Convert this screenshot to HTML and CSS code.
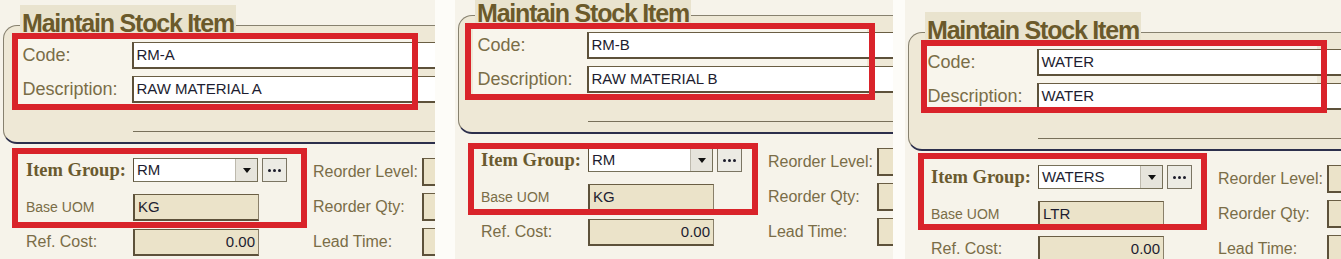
FILE: index.html
```html
<!DOCTYPE html>
<html>
<head>
<meta charset="utf-8">
<link rel="stylesheet" href="styles.css">
</head>
<body>
<div class="strip">
  <section class="panel p1">
    <div class="inner">
      <div class="fs">
        <div class="legend">Maintain Stock Item</div>
        <div class="ident">
          <span class="lbl">Code:</span><div class="inp wide">RM-A</div>
          <span class="lbl">Description:</span><div class="inp wide">RAW MATERIAL A</div>
        </div>
        <div class="sep"></div>
      </div>
      <div class="details">
        <div class="left">
          <span class="lbl bold">Item Group:</span>
          <div class="pick"><div class="combo"><span class="val">RM</span><span class="dd"><i class="tri"></i></span></div><div class="more"><i></i><i></i><i></i></div></div>
          <span class="lbl small">Base UOM</span><div class="inp ro">KG</div>
          <span class="lbl">Ref. Cost:</span><div class="inp ro num">0.00</div>
        </div>
        <div class="right">
          <span class="lbl">Reorder Level:</span><div class="inp ro stub"></div>
          <span class="lbl">Reorder Qty:</span><div class="inp ro stub"></div>
          <span class="lbl">Lead Time:</span><div class="inp ro stub"></div>
        </div>
      </div>
      <div class="mark m1"></div>
      <div class="mark m2"></div>
    </div>
  </section>
  <section class="panel p2">
    <div class="inner">
      <div class="fs">
        <div class="legend">Maintain Stock Item</div>
        <div class="ident">
          <span class="lbl">Code:</span><div class="inp wide">RM-B</div>
          <span class="lbl">Description:</span><div class="inp wide">RAW MATERIAL B</div>
        </div>
        <div class="sep"></div>
      </div>
      <div class="details">
        <div class="left">
          <span class="lbl bold">Item Group:</span>
          <div class="pick"><div class="combo"><span class="val">RM</span><span class="dd"><i class="tri"></i></span></div><div class="more"><i></i><i></i><i></i></div></div>
          <span class="lbl small">Base UOM</span><div class="inp ro">KG</div>
          <span class="lbl">Ref. Cost:</span><div class="inp ro num">0.00</div>
        </div>
        <div class="right">
          <span class="lbl">Reorder Level:</span><div class="inp ro stub"></div>
          <span class="lbl">Reorder Qty:</span><div class="inp ro stub"></div>
          <span class="lbl">Lead Time:</span><div class="inp ro stub"></div>
        </div>
      </div>
      <div class="mark m1"></div>
      <div class="mark m2"></div>
    </div>
  </section>
  <section class="panel p3">
    <div class="inner">
      <div class="fs">
        <div class="legend">Maintain Stock Item</div>
        <div class="ident">
          <span class="lbl">Code:</span><div class="inp wide">WATER</div>
          <span class="lbl">Description:</span><div class="inp wide">WATER</div>
        </div>
        <div class="sep"></div>
      </div>
      <div class="details">
        <div class="left">
          <span class="lbl bold">Item Group:</span>
          <div class="pick"><div class="combo"><span class="val">WATERS</span><span class="dd"><i class="tri"></i></span></div><div class="more"><i></i><i></i><i></i></div></div>
          <span class="lbl small">Base UOM</span><div class="inp ro">LTR</div>
          <span class="lbl">Ref. Cost:</span><div class="inp ro num">0.00</div>
        </div>
        <div class="right">
          <span class="lbl">Reorder Level:</span><div class="inp ro stub"></div>
          <span class="lbl">Reorder Qty:</span><div class="inp ro stub"></div>
          <span class="lbl">Lead Time:</span><div class="inp ro stub"></div>
        </div>
      </div>
      <div class="mark m1"></div>
      <div class="mark m2"></div>
    </div>
  </section>
</div>
</body>
</html>
```
FILE: styles.css
```css
html, body {
  margin: 0;
  padding: 0;
  background: #fdfcf8;
  font-family: "Liberation Sans", Arial, sans-serif;
}
.strip {
  display: flex;
  width: 1341px;
  height: 259px;
  overflow: hidden;
}
.panel {
  height: 259px;
  overflow: hidden;
  background: #f6f3ea;
  flex: none;
}
.p1 { width: 435px; margin-right: 20px; }
.p2 { width: 438px; margin-right: 12px; --dy: -10px; }
.p3 { width: 436px; --dy: 7px; }
.inner {
  position: relative;
  display: flow-root;
  margin-top: var(--dy, 0px);
}
.fs {
  position: relative;
  box-sizing: border-box;
  margin: 25px 0 0 3px;
  width: 470px;
  height: 119px;
  background: #eee8d6;
  border: 1.5px solid #87816f;
  border-right: none;
  border-bottom: 2.5px solid #2c2f4c;
  border-radius: 14px 0 0 14px;
  padding: 0;
}
.legend {
  position: absolute;
  left: 16px;
  top: -21px;
  height: 29px;
  padding: 0 2px;
  background: #e9e3ce;
  color: #6b5a2b;
  font-weight: bold;
  font-size: 25px;
  letter-spacing: -1.2px;
  line-height: 36px;
  white-space: nowrap;
}
.ident {
  margin: 12.5px 0 0 13.5px;
  width: 394px;
  box-sizing: border-box;
  padding: 3px 0 1px 0;
  background: #f8f5ec;
  display: grid;
  grid-template-columns: 114px 1fr;
  grid-auto-rows: 27px;
  row-gap: 7px;
  align-items: center;
}
.lbl {
  color: #7a6d47;
  font-size: 16px;
  white-space: nowrap;
}
.ident .lbl {
  font-size: 18px;
  padding-left: 5px;
}
.inp {
  box-sizing: border-box;
  height: 27px;
  background: #ffffff;
  border-top: 1.5px solid #6a5e44;
  border-left: 2px solid #5d513a;
  border-bottom: 2px solid #5d513a;
  color: #1d1d30;
  font-size: 15px;
  line-height: 23px;
  padding-left: 3px;
  white-space: nowrap;
}
.inp.wide {
  width: 330px;
}
.sep {
  margin: 27px 0 0 128.5px;
  border-top: 1.5px solid #78705a;
}
.details {
  display: flex;
  margin-top: 14px;
  padding-left: 26px;
}
.left {
  display: grid;
  grid-template-columns: 107px auto;
  grid-auto-rows: 28px;
  row-gap: 7px;
  align-items: center;
}
.right {
  margin-left: 26px;
  display: grid;
  grid-template-columns: 109px 40px;
  grid-auto-rows: 28px;
  row-gap: 7px;
  align-items: center;
}
.lbl.bold {
  font-family: "Liberation Serif", "Times New Roman", serif;
  font-weight: bold;
  font-size: 18.5px;
  color: #6a5a2f;
  align-self: start;
  line-height: 24px;
}
.lbl.small {
  font-size: 14px;
}
.inp.ro {
  width: 126px;
  background: #ebe3c9;
  border-right: 1px solid #8a806a;
}
.inp.num {
  text-align: right;
  padding-right: 3px;
}
.inp.stub {
  width: 40px;
  height: 28px;
  border-right: none;
}
.pick {
  display: flex;
  align-self: start;
  gap: 4px;
}
.combo {
  box-sizing: border-box;
  width: 125px;
  height: 24px;
  display: flex;
  background: #ffffff;
  border: 1px solid #767059;
  border-left: 1.5px solid #5d513a;
}
.combo .val {
  flex: 1;
  color: #1d1d30;
  font-size: 15px;
  line-height: 22px;
  padding-left: 3px;
  white-space: nowrap;
}
.combo .dd {
  width: 21px;
  background: #e6e4dc;
  border-left: 1px solid #bdb9ad;
  display: flex;
  align-items: center;
  justify-content: center;
}
.tri {
  display: block;
  width: 0;
  height: 0;
  border-left: 4.5px solid transparent;
  border-right: 4.5px solid transparent;
  border-top: 5px solid #111111;
}
.more {
  box-sizing: border-box;
  width: 25px;
  height: 24px;
  background: #ecebe4;
  border: 1.5px solid #7b7563;
  display: flex;
  align-items: center;
  justify-content: center;
  gap: 2px;
}
.more i {
  display: block;
  width: 3px;
  height: 3px;
  border-radius: 50%;
  background: #1b1b2a;
}
.mark {
  position: absolute;
  box-sizing: border-box;
  border: 6.5px solid #d9232a;
  pointer-events: none;
}
.m1 { left: 12px; top: 33px; width: 406px; height: 77px; }
.m2 { left: 12px; top: 148px; width: 295px; height: 80px; }
.p2 .m1 { left: 10px; width: 410px; }
.p2 .m2 { left: 13px; top: 153px; width: 290px; height: 72px; }
.p3 .m1 { left: 16px; width: 406px; height: 73px; }
.p3 .m2 { left: 13px; top: 146px; width: 289px; height: 77px; }
```
